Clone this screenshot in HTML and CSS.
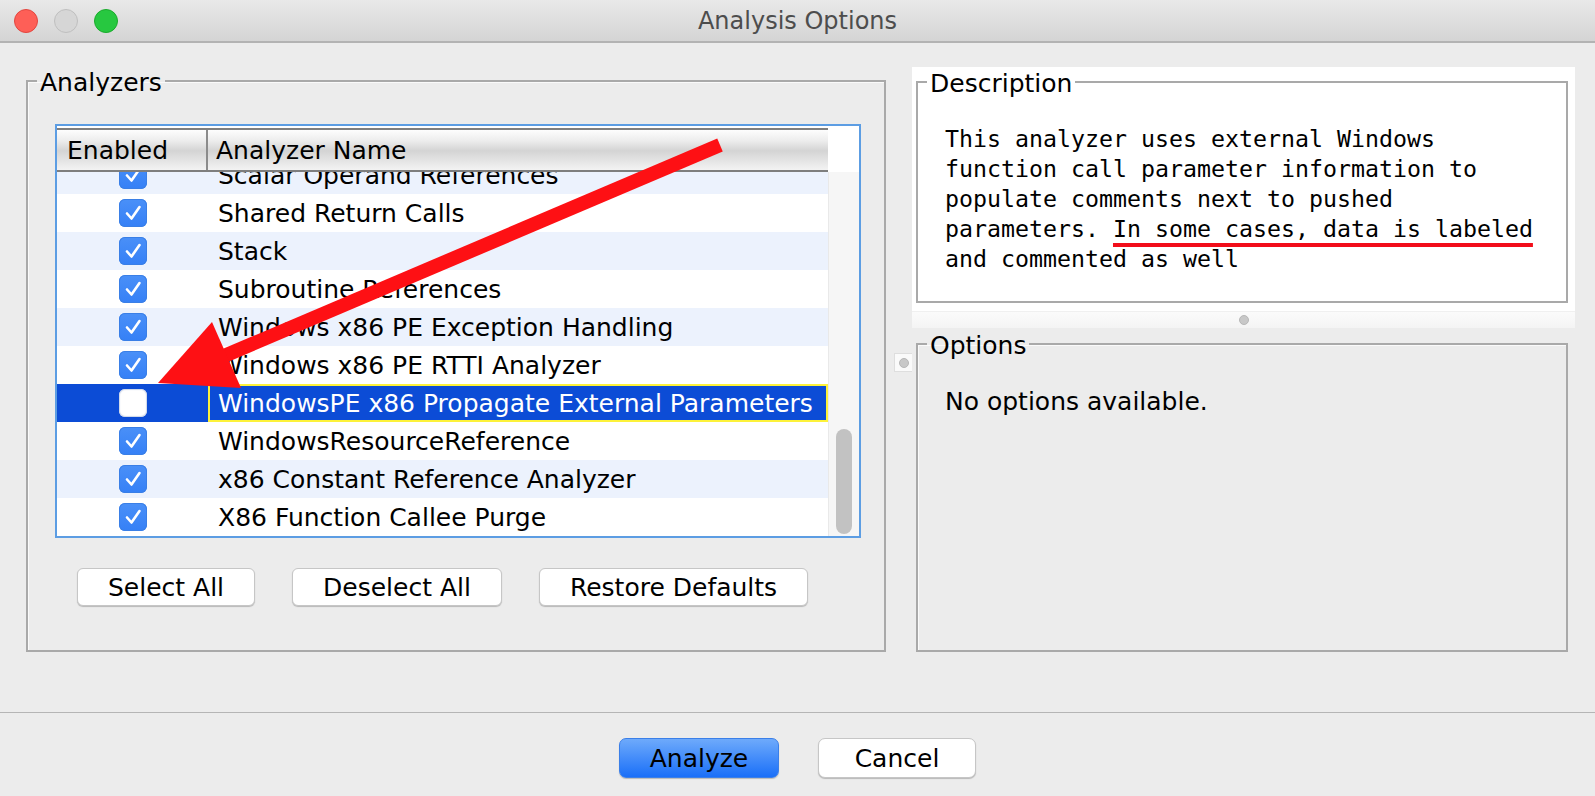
FILE: index.html
```html
<!DOCTYPE html>
<html lang="en">
<head>
<meta charset="utf-8">
<title>Analysis Options</title>
<link rel="stylesheet" href="styles.css">
</head>
<body>
<div class="window">
  <header class="titlebar">
    <div class="lights">
      <span class="light red"></span>
      <span class="light gray"></span>
      <span class="light green"></span>
    </div>
    <div class="title">Analysis Options</div>
    <div></div>
  </header>

  <main class="content">
    <fieldset class="group analyzers">
      <legend>Analyzers</legend>
      <div class="analyzers-body">
        <div class="table">
          <div class="table-main">
            <div class="thead">
              <div class="th th-enabled">Enabled</div>
              <div class="th th-name">Analyzer Name</div>
            </div>
            <div class="tbody">
              <div class="row stripe first"><div class="cell-check"><span class="cb on"><svg viewBox="0 0 28 28"><polyline points="8,14.5 12.5,19.5 20.5,8"/></svg></span></div><div class="cell-name">Scalar Operand References</div></div>
              <div class="row"><div class="cell-check"><span class="cb on"><svg viewBox="0 0 28 28"><polyline points="8,14.5 12.5,19.5 20.5,8"/></svg></span></div><div class="cell-name">Shared Return Calls</div></div>
              <div class="row stripe"><div class="cell-check"><span class="cb on"><svg viewBox="0 0 28 28"><polyline points="8,14.5 12.5,19.5 20.5,8"/></svg></span></div><div class="cell-name">Stack</div></div>
              <div class="row"><div class="cell-check"><span class="cb on"><svg viewBox="0 0 28 28"><polyline points="8,14.5 12.5,19.5 20.5,8"/></svg></span></div><div class="cell-name">Subroutine References</div></div>
              <div class="row stripe"><div class="cell-check"><span class="cb on"><svg viewBox="0 0 28 28"><polyline points="8,14.5 12.5,19.5 20.5,8"/></svg></span></div><div class="cell-name">Windows x86 PE Exception Handling</div></div>
              <div class="row"><div class="cell-check"><span class="cb on"><svg viewBox="0 0 28 28"><polyline points="8,14.5 12.5,19.5 20.5,8"/></svg></span></div><div class="cell-name">Windows x86 PE RTTI Analyzer</div></div>
              <div class="row selected"><div class="cell-check"><span class="cb off"></span></div><div class="cell-name focus">WindowsPE x86 Propagate External Parameters</div></div>
              <div class="row"><div class="cell-check"><span class="cb on"><svg viewBox="0 0 28 28"><polyline points="8,14.5 12.5,19.5 20.5,8"/></svg></span></div><div class="cell-name">WindowsResourceReference</div></div>
              <div class="row stripe"><div class="cell-check"><span class="cb on"><svg viewBox="0 0 28 28"><polyline points="8,14.5 12.5,19.5 20.5,8"/></svg></span></div><div class="cell-name">x86 Constant Reference Analyzer</div></div>
              <div class="row"><div class="cell-check"><span class="cb on"><svg viewBox="0 0 28 28"><polyline points="8,14.5 12.5,19.5 20.5,8"/></svg></span></div><div class="cell-name">X86 Function Callee Purge</div></div>
            </div>
          </div>
          <div class="scroll">
            <div class="scroll-top"></div>
            <div class="track"><div class="thumb"></div></div>
          </div>
        </div>
        <div class="btn-row">
          <button class="btn">Select All</button>
          <button class="btn">Deselect All</button>
          <button class="btn">Restore Defaults</button>
        </div>
      </div>
    </fieldset>

    <div class="vdivider"><span class="handle"><span class="dot"></span></span></div>

    <div class="right">
      <div class="desc-pane">
        <fieldset class="group desc">
          <legend>Description</legend>
          <p class="desc-text">This analyzer uses external Windows function call parameter information to populate comments next to pushed parameters. <span class="mark">In some cases, data is labeled</span> and commented as well</p>
        </fieldset>
        <div class="hsplit"><span class="dot"></span></div>
      </div>
      <fieldset class="group options">
        <legend>Options</legend>
        <p class="no-options">No options available.</p>
      </fieldset>
    </div>
  </main>

  <footer class="footer">
    <button class="btn btn-primary">Analyze</button>
    <button class="btn btn-cancel">Cancel</button>
  </footer>

  <svg class="annotation" viewBox="0 0 1595 796" width="1595" height="796">
    <line x1="720" y1="145" x2="224" y2="356" stroke="#fe1014" stroke-width="14"/>
    <polygon points="158,383 212,322 241,388" fill="#fe1014"/>
  </svg>
</div>
</body>
</html>
```

FILE: styles.css
```css
* { box-sizing: border-box; }

html, body {
  margin: 0;
  padding: 0;
}

body {
  width: 1595px;
  height: 796px;
  overflow: hidden;
  background: #ececec;
  font-family: "DejaVu Sans", "Liberation Sans", sans-serif;
  font-size: 25px;
  color: #000;
}

.window {
  position: relative;
  width: 1595px;
  height: 796px;
  display: flex;
  flex-direction: column;
}

/* ---------- title bar ---------- */
.titlebar {
  flex: none;
  height: 43px;
  display: grid;
  grid-template-columns: 1fr auto 1fr;
  align-items: center;
  background: linear-gradient(#e9e9e9, #d4d4d4);
  border-bottom: 2px solid #b3b3b3;
}

.lights {
  display: flex;
  gap: 16px;
  padding-left: 14px;
}

.light {
  width: 24px;
  height: 24px;
  border-radius: 50%;
}

.light.red { background: #fe5f57; border: 1px solid #e2463f; }
.light.gray { background: #d6d6d6; border: 1px solid #bfbfbf; }
.light.green { background: #27c840; border: 1px solid #1aab2c; }

.title {
  font-size: 24px;
  color: #4d4d4d;
}

/* ---------- content ---------- */
.content {
  flex: 1;
  display: flex;
  padding: 0 20px 0 26px;
  min-height: 0;
}

.group {
  margin: 0;
  padding: 0;
  min-width: 0;
  border: 2px solid #a9a9a9;
  box-shadow: inset 1px 1px 0 #fafafa;
}

.group legend {
  font-size: 25px;
  line-height: 26px;
  padding: 5px 3px 0;
  margin-left: 9px;
}

.analyzers {
  width: 860px;
  margin: 22px 0 60px;
}

.analyzers-body {
  padding: 28px 0 0 27px;
}

/* ---------- table ---------- */
.table {
  width: 806px;
  height: 414px;
  border: 2px solid #5c9de3;
  background: #fff;
  display: grid;
  grid-template-columns: 771px 31px;
}

.table-main {
  padding-top: 2px;
  display: flex;
  flex-direction: column;
  min-height: 0;
}

.thead {
  flex: none;
  height: 44px;
  display: grid;
  grid-template-columns: 151px 1fr;
  border-top: 2px solid #7e7e7e;
  border-bottom: 2px solid #7e7e7e;
  background: linear-gradient(#fdfdfd 0%, #ececec 28%, #d4d4d4 52%, #e3e3e3 75%, #f3f3f3 100%);
}

.th {
  display: flex;
  align-items: center;
  padding-left: 10px;
  line-height: 1;
}

.th-enabled {
  border-right: 2px solid #8b8b8b;
}

.th-name {
  padding-left: 8px;
}

.tbody {
  flex: 1;
  overflow: hidden;
}

.row {
  height: 38px;
  display: grid;
  grid-template-columns: 151px 1fr;
  background: #fff;
}

.row.first { margin-top: -16px; }
.row.stripe { background: #ecf2fd; }
.row.selected { background: #0c4cd6; color: #fff; }

.cell-check {
  display: flex;
  align-items: center;
  justify-content: center;
}

.cell-name {
  display: flex;
  align-items: center;
  padding-left: 10px;
  white-space: nowrap;
}

.cell-name.focus {
  border: 2px solid #fdf23a;
  padding-left: 8px;
}

.cb {
  width: 28px;
  height: 28px;
  border-radius: 6px;
  display: block;
}

.cb.on {
  background: linear-gradient(#4a90f8, #3580f6);
  box-shadow: 0 0 0 1px #3a7fe6 inset;
}

.cb.on svg {
  display: block;
  width: 28px;
  height: 28px;
}

.cb.on polyline {
  fill: none;
  stroke: #fff;
  stroke-width: 2.6;
  stroke-linecap: round;
  stroke-linejoin: round;
}

.cb.off {
  background: #fff;
  box-shadow: 0 0 1px 1px rgba(200, 210, 230, 0.9) inset;
}

/* ---------- scrollbar ---------- */
.scroll {
  display: flex;
  flex-direction: column;
}

.scroll-top {
  flex: none;
  height: 46px;
  background: #fff;
}

.track {
  flex: 1;
  background: #f6f6f6;
  border-left: 1px solid #e9e9e9;
  display: flex;
  flex-direction: column;
  justify-content: flex-end;
  align-items: flex-start;
  padding: 0 0 2px 7px;
}

.thumb {
  width: 16px;
  height: 105px;
  border-radius: 8px;
  background: #c2c2c2;
}

/* ---------- buttons ---------- */
.btn-row {
  display: flex;
  gap: 37px;
  margin-top: 30px;
  padding-left: 22px;
}

.btn {
  font-family: "DejaVu Sans", "Liberation Sans", sans-serif;
  font-size: 25px;
  color: #000;
  height: 38px;
  padding: 0 30px;
  background: #fff;
  border: 1px solid #c6c6c6;
  border-radius: 6px;
  box-shadow: 0 1px 1px rgba(0, 0, 0, 0.22);
  line-height: 1;
}

/* ---------- dividers ---------- */
.vdivider {
  width: 26px;
  flex: none;
  padding: 310px 0 0 8px;
}

.handle {
  display: flex;
  align-items: center;
  justify-content: center;
  width: 18px;
  height: 19px;
  background: #fafafa;
  border: 1px solid #dedede;
  border-right: none;
}

.dot {
  display: block;
  width: 10px;
  height: 10px;
  border-radius: 50%;
  background: #c8c8c8;
  border: 1px solid #b7b7b7;
}

/* ---------- right column ---------- */
.right {
  width: 663px;
  flex: none;
  display: flex;
  flex-direction: column;
}

.desc-pane {
  flex: none;
  margin-top: 24px;
  height: 261px;
  background: #fff;
  display: flex;
  flex-direction: column;
}

.desc {
  height: 237px;
  margin: -1px 7px 0 4px;
  box-shadow: none;
}

.desc-text {
  margin: 0;
  padding: 27px 0 0 27px;
  width: 620px;
  font-family: "DejaVu Sans Mono", "Liberation Mono", monospace;
  font-size: 23.25px;
  line-height: 30px;
}

.mark {
  text-decoration: underline;
  text-decoration-color: #f20d1a;
  text-decoration-thickness: 4px;
  text-underline-offset: 6px;
}

.hsplit {
  margin-top: auto;
  height: 17px;
  border-top: 1px solid #f0f0f0;
  background: linear-gradient(#fbfbfb, #f4f4f4);
  display: flex;
  align-items: center;
  justify-content: center;
}

.options {
  flex: 1;
  margin: 0 7px 60px 4px;
}

.no-options {
  margin: 0;
  padding: 28px 0 0 27px;
  line-height: 30px;
}

/* ---------- footer ---------- */
.footer {
  flex: none;
  height: 84px;
  border-top: 1px solid #b5b5b5;
  display: flex;
  justify-content: center;
  align-items: flex-start;
  gap: 39px;
  padding-top: 25px;
}

.footer .btn {
  height: 40px;
  padding: 0;
  border-radius: 7px;
}

.btn-primary {
  width: 160px;
  background: linear-gradient(#6eaafb, #1a6ff8);
  border-color: #3b7fe8;
}

.btn-cancel {
  width: 158px;
}

/* ---------- annotation overlay ---------- */
.annotation {
  position: absolute;
  left: 0;
  top: 0;
  pointer-events: none;
}
```
